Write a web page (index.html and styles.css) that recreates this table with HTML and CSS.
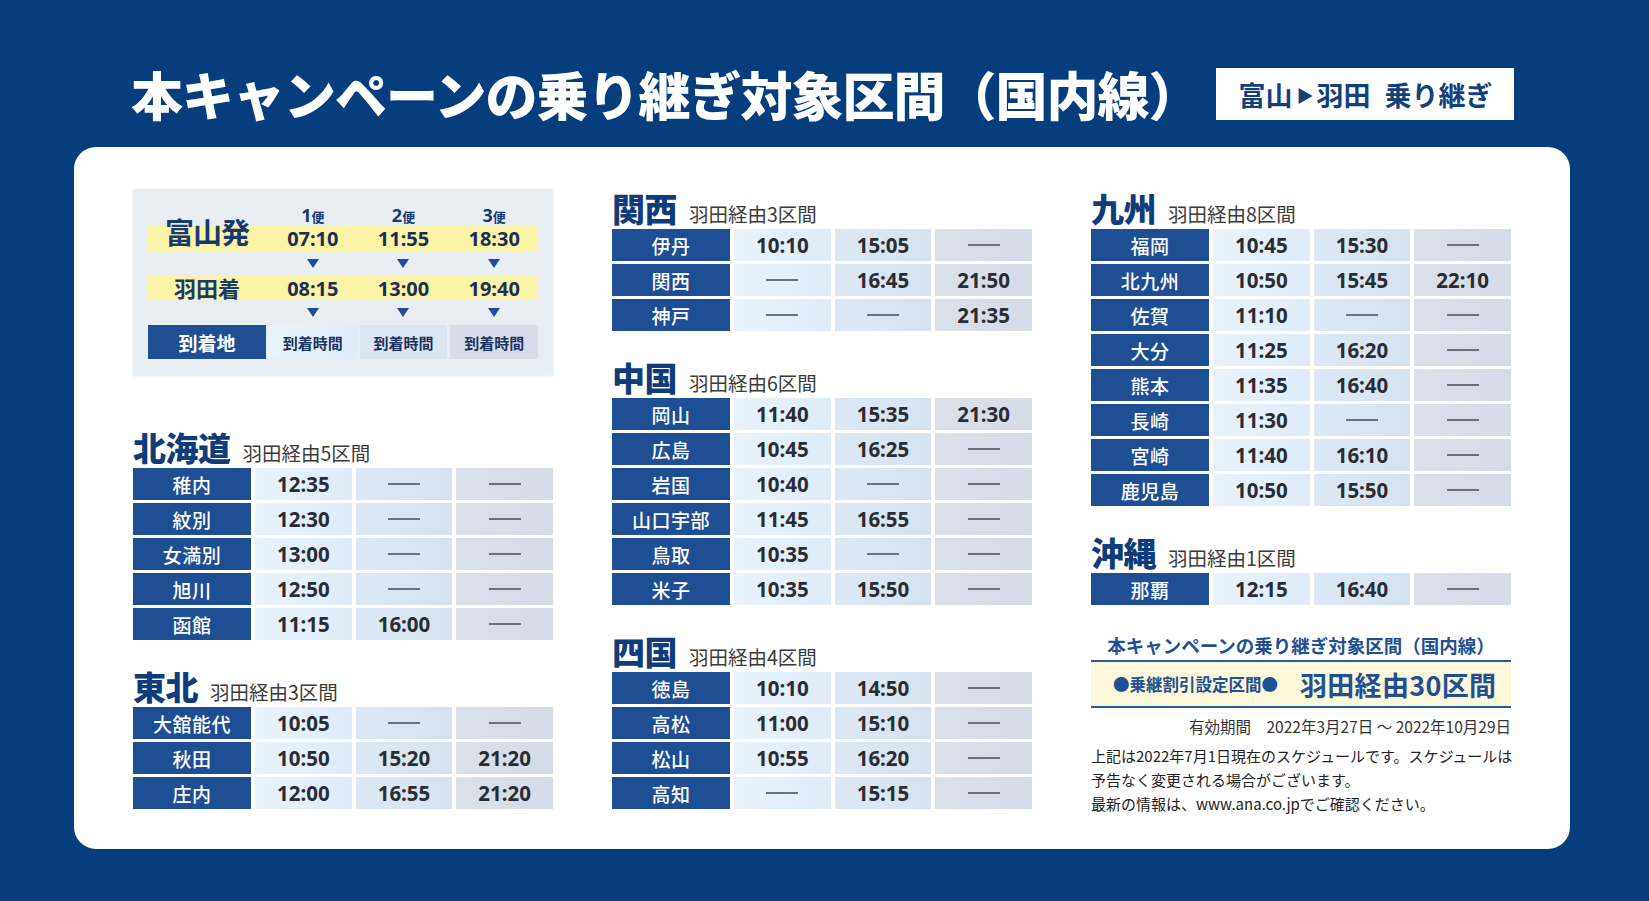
FILE: index.html
```html
<!DOCTYPE html>
<html lang="ja">
<head>
<meta charset="utf-8">
<title>本キャンペーンの乗り継ぎ対象区間（国内線）</title>
<link rel="stylesheet" href="styles.css">
</head>
<body>
<header class="page-head">
  <h1 class="title">本キャンペーンの乗り継ぎ対象区間（国内線）</h1>
  <div class="route-box">富山<span class="tri">▶</span>羽田<span class="sp"></span>乗り継ぎ</div>
</header>

<main class="card">
  <div class="col">
    <div class="flight-box">
      <div class="band band-1"></div>
      <div class="band band-2"></div>
      <div class="dep-label">富山発</div>
      <div class="bin c2 r1"><b>1</b>便</div>
      <div class="bin c3 r1"><b>2</b>便</div>
      <div class="bin c4 r1"><b>3</b>便</div>
      <div class="ft c2 r2">07:10</div>
      <div class="ft c3 r2">11:55</div>
      <div class="ft c4 r2">18:30</div>
      <div class="arr c2 r3"><i></i></div>
      <div class="arr c3 r3"><i></i></div>
      <div class="arr c4 r3"><i></i></div>
      <div class="arr-label">羽田着</div>
      <div class="ft c2 r4">08:15</div>
      <div class="ft c3 r4">13:00</div>
      <div class="ft c4 r4">19:40</div>
      <div class="arr c2 r5"><i></i></div>
      <div class="arr c3 r5"><i></i></div>
      <div class="arr c4 r5"><i></i></div>
      <div class="dest-head">到着地</div>
      <div class="dest-time t1">到着時間</div>
      <div class="dest-time t2">到着時間</div>
      <div class="dest-time t3">到着時間</div>
    </div>

    <section class="sec sec-first">
      <h2 class="sec-head"><span class="area">北海道</span><span class="sub">羽田経由5区間</span></h2>
      <div class="tbl">
        <div class="row"><span class="nm">稚内</span><span class="v v1">12:35</span><span class="v v2"><i class="dash"></i></span><span class="v v3"><i class="dash"></i></span></div>
        <div class="row"><span class="nm">紋別</span><span class="v v1">12:30</span><span class="v v2"><i class="dash"></i></span><span class="v v3"><i class="dash"></i></span></div>
        <div class="row"><span class="nm">女満別</span><span class="v v1">13:00</span><span class="v v2"><i class="dash"></i></span><span class="v v3"><i class="dash"></i></span></div>
        <div class="row"><span class="nm">旭川</span><span class="v v1">12:50</span><span class="v v2"><i class="dash"></i></span><span class="v v3"><i class="dash"></i></span></div>
        <div class="row"><span class="nm">函館</span><span class="v v1">11:15</span><span class="v v2">16:00</span><span class="v v3"><i class="dash"></i></span></div>
      </div>
    </section>

    <section class="sec">
      <h2 class="sec-head"><span class="area">東北</span><span class="sub">羽田経由3区間</span></h2>
      <div class="tbl">
        <div class="row"><span class="nm">大舘能代</span><span class="v v1">10:05</span><span class="v v2"><i class="dash"></i></span><span class="v v3"><i class="dash"></i></span></div>
        <div class="row"><span class="nm">秋田</span><span class="v v1">10:50</span><span class="v v2">15:20</span><span class="v v3">21:20</span></div>
        <div class="row"><span class="nm">庄内</span><span class="v v1">12:00</span><span class="v v2">16:55</span><span class="v v3">21:20</span></div>
      </div>
    </section>
  </div>

  <div class="col col-r">
    <section class="sec sec-top">
      <h2 class="sec-head"><span class="area">関西</span><span class="sub">羽田経由3区間</span></h2>
      <div class="tbl">
        <div class="row"><span class="nm">伊丹</span><span class="v v1">10:10</span><span class="v v2">15:05</span><span class="v v3"><i class="dash"></i></span></div>
        <div class="row"><span class="nm">関西</span><span class="v v1"><i class="dash"></i></span><span class="v v2">16:45</span><span class="v v3">21:50</span></div>
        <div class="row"><span class="nm">神戸</span><span class="v v1"><i class="dash"></i></span><span class="v v2"><i class="dash"></i></span><span class="v v3">21:35</span></div>
      </div>
    </section>

    <section class="sec">
      <h2 class="sec-head"><span class="area">中国</span><span class="sub">羽田経由6区間</span></h2>
      <div class="tbl">
        <div class="row"><span class="nm">岡山</span><span class="v v1">11:40</span><span class="v v2">15:35</span><span class="v v3">21:30</span></div>
        <div class="row"><span class="nm">広島</span><span class="v v1">10:45</span><span class="v v2">16:25</span><span class="v v3"><i class="dash"></i></span></div>
        <div class="row"><span class="nm">岩国</span><span class="v v1">10:40</span><span class="v v2"><i class="dash"></i></span><span class="v v3"><i class="dash"></i></span></div>
        <div class="row"><span class="nm">山口宇部</span><span class="v v1">11:45</span><span class="v v2">16:55</span><span class="v v3"><i class="dash"></i></span></div>
        <div class="row"><span class="nm">鳥取</span><span class="v v1">10:35</span><span class="v v2"><i class="dash"></i></span><span class="v v3"><i class="dash"></i></span></div>
        <div class="row"><span class="nm">米子</span><span class="v v1">10:35</span><span class="v v2">15:50</span><span class="v v3"><i class="dash"></i></span></div>
      </div>
    </section>

    <section class="sec">
      <h2 class="sec-head"><span class="area">四国</span><span class="sub">羽田経由4区間</span></h2>
      <div class="tbl">
        <div class="row"><span class="nm">徳島</span><span class="v v1">10:10</span><span class="v v2">14:50</span><span class="v v3"><i class="dash"></i></span></div>
        <div class="row"><span class="nm">高松</span><span class="v v1">11:00</span><span class="v v2">15:10</span><span class="v v3"><i class="dash"></i></span></div>
        <div class="row"><span class="nm">松山</span><span class="v v1">10:55</span><span class="v v2">16:20</span><span class="v v3"><i class="dash"></i></span></div>
        <div class="row"><span class="nm">高知</span><span class="v v1"><i class="dash"></i></span><span class="v v2">15:15</span><span class="v v3"><i class="dash"></i></span></div>
      </div>
    </section>
  </div>

  <div class="col col-r">
    <section class="sec sec-top">
      <h2 class="sec-head"><span class="area">九州</span><span class="sub">羽田経由8区間</span></h2>
      <div class="tbl">
        <div class="row"><span class="nm">福岡</span><span class="v v1">10:45</span><span class="v v2">15:30</span><span class="v v3"><i class="dash"></i></span></div>
        <div class="row"><span class="nm">北九州</span><span class="v v1">10:50</span><span class="v v2">15:45</span><span class="v v3">22:10</span></div>
        <div class="row"><span class="nm">佐賀</span><span class="v v1">11:10</span><span class="v v2"><i class="dash"></i></span><span class="v v3"><i class="dash"></i></span></div>
        <div class="row"><span class="nm">大分</span><span class="v v1">11:25</span><span class="v v2">16:20</span><span class="v v3"><i class="dash"></i></span></div>
        <div class="row"><span class="nm">熊本</span><span class="v v1">11:35</span><span class="v v2">16:40</span><span class="v v3"><i class="dash"></i></span></div>
        <div class="row"><span class="nm">長崎</span><span class="v v1">11:30</span><span class="v v2"><i class="dash"></i></span><span class="v v3"><i class="dash"></i></span></div>
        <div class="row"><span class="nm">宮崎</span><span class="v v1">11:40</span><span class="v v2">16:10</span><span class="v v3"><i class="dash"></i></span></div>
        <div class="row"><span class="nm">鹿児島</span><span class="v v1">10:50</span><span class="v v2">15:50</span><span class="v v3"><i class="dash"></i></span></div>
      </div>
    </section>

    <section class="sec">
      <h2 class="sec-head"><span class="area">沖縄</span><span class="sub">羽田経由1区間</span></h2>
      <div class="tbl">
        <div class="row"><span class="nm">那覇</span><span class="v v1">12:15</span><span class="v v2">16:40</span><span class="v v3"><i class="dash"></i></span></div>
      </div>
    </section>

    <div class="info">
      <p class="info-title">本キャンペーンの乗り継ぎ対象区間（国内線）</p>
      <div class="info-band">
        <span class="info-small">●乗継割引設定区間●</span>
        <span class="info-big">羽田経由30区間</span>
      </div>
      <p class="validity">有効期間　2022年3月27日 ～ 2022年10月29日</p>
      <p class="notes">上記は2022年7月1日現在のスケジュールです。スケジュールは<br>予告なく変更される場合がございます。<br>最新の情報は、www.ana.co.jpでご確認ください。</p>
    </div>
  </div>
</main>
</body>
</html>
```

FILE: styles.css
```css
* { box-sizing: border-box; }

html, body {
  margin: 0;
  padding: 0;
}

body {
  background: #063d7d;
  width: 1649px;
  height: 901px;
  overflow: hidden;
  font-family: "Noto Sans CJK JP", "Noto Sans", sans-serif;
  color: #222;
}

/* ---------- header ---------- */
.page-head {
  display: flex;
  align-items: center;
  padding: 68px 0 0 131px;
  height: 120px;
}

.title {
  margin: 0;
  font-size: 52px;
  line-height: 52px;
  font-weight: 900;
  color: #fff;
  letter-spacing: -1px;
  white-space: nowrap;
}

.route-box {
  margin-left: 17px;
  width: 298px;
  height: 52px;
  background: #fff;
  display: flex;
  align-items: center;
  justify-content: center;
  font-size: 27px;
  font-weight: 700;
  color: #143f7d;
  white-space: nowrap;
}

.route-box .tri {
  font-size: 17px;
  margin: 0 3px 0 4px;
}

.route-box .sp { display: inline-block; width: 14px; }

/* ---------- card ---------- */
.card {
  margin: 27px 0 0 74px;
  width: 1496px;
  height: 702px;
  background: #fff;
  border-radius: 22px;
  padding: 42px 59px 0 59px;
  display: grid;
  grid-template-columns: repeat(3, 420px);
  column-gap: 59px;
  align-items: start;
}

.col { display: flex; flex-direction: column; }

/* ---------- flight box ---------- */
.flight-box {
  height: 186px;
  background: #e9eef5;
  box-shadow: 0 1px 3px rgba(30, 60, 110, 0.12);
  padding: 15px 15px 0 15px;
  display: grid;
  grid-template-columns: 118px repeat(3, 1fr);
  grid-template-rows: 22px 25px 25px 24px 25px 34px;
  column-gap: 3px;
  color: #1b3360;
}

.band {
  grid-column: 1 / -1;
  background: #fbf4a6;
}
.band-1 { grid-row: 2; }
.band-2 { grid-row: 4; }

.c2 { grid-column: 2; }
.c3 { grid-column: 3; }
.c4 { grid-column: 4; }
.r1 { grid-row: 1; }
.r2 { grid-row: 2; }
.r3 { grid-row: 3; }
.r4 { grid-row: 4; }
.r5 { grid-row: 5; }

.dep-label {
  grid-column: 1;
  grid-row: 1 / 3;
  align-self: end;
  margin-bottom: 5px;
  text-align: center;
  font-size: 29px;
  line-height: 30px;
  font-weight: 700;
  color: #173a72;
  letter-spacing: -1px;
}

.arr-label {
  grid-column: 1;
  grid-row: 4;
  align-self: center;
  text-align: center;
  font-size: 22px;
  line-height: 24px;
  font-weight: 700;
  color: #173a72;
  margin-top: -2px;
}

.bin {
  text-align: center;
  font-size: 13px;
  line-height: 22px;
  font-weight: 700;
  color: #173a72;
}
.bin b {
  font-family: "Noto Sans", sans-serif;
  font-size: 18px;
  font-weight: 700;
}

.ft {
  text-align: center;
  font-family: "Noto Sans", sans-serif;
  font-size: 20px;
  line-height: 25px;
  font-weight: 700;
  color: #1b2f55;
}

.arr {
  display: flex;
  justify-content: center;
  align-items: center;
}
.arr i {
  display: block;
  width: 0;
  height: 0;
  border-left: 6px solid transparent;
  border-right: 6px solid transparent;
  border-top: 9px solid #1f4e94;
}

.dest-head {
  grid-column: 1;
  grid-row: 6;
  background: #1e4f95;
  color: #fff;
  font-size: 19px;
  font-weight: 700;
  display: flex;
  align-items: center;
  justify-content: center;
}

.dest-time {
  grid-row: 6;
  display: flex;
  align-items: center;
  justify-content: center;
  font-size: 15px;
  font-weight: 700;
  color: #1b3360;
}
.dest-time.t1 { grid-column: 2; background: linear-gradient(90deg, #e9f3fb, #e0edf8); }
.dest-time.t2 { grid-column: 3; background: #dbe6f1; }
.dest-time.t3 { grid-column: 4; background: #d6dde8; }

/* ---------- sections ---------- */
.sec { margin-top: 29px; }
.sec-first { margin-top: 55px; }
.col-r .sec-top { margin-top: 2px; }

.sec-head {
  margin: 0 0 2px 0;
  height: 36px;
  display: flex;
  align-items: baseline;
  white-space: nowrap;
}

.area {
  font-size: 33px;
  line-height: 35px;
  font-weight: 900;
  color: #0f3c7a;
  letter-spacing: -0.5px;
}

.sub {
  margin-left: 12px;
  font-size: 19.5px;
  font-weight: 400;
  color: #3b3b3b;
}

.tbl {
  display: flex;
  flex-direction: column;
  gap: 3px;
}

.row {
  display: grid;
  grid-template-columns: 118px repeat(3, 1fr);
  column-gap: 4px;
  height: 32px;
}

.row > span {
  display: flex;
  align-items: center;
  justify-content: center;
}

.nm {
  background: #1e4f95;
  color: #fff;
  font-size: 19px;
  font-weight: 500;
  letter-spacing: 0.5px;
}

.v {
  font-family: "Noto Sans", sans-serif;
  font-size: 20.5px;
  font-weight: 700;
  color: #2a2d34;
}
.v1 { background: linear-gradient(90deg, #e8f3fc, #dfecf8); }
.v2 { background: linear-gradient(90deg, #dce8f3, #d6e3ef); }
.v3 { background: linear-gradient(90deg, #d9e0ea, #d5dce7); }

.dash {
  display: block;
  width: 32px;
  height: 2px;
  background: #6b717d;
}

/* ---------- info block ---------- */
.info { margin-top: 30px; }

.info-title {
  margin: 0;
  text-align: center;
  font-size: 18.5px;
  line-height: 20px;
  font-weight: 700;
  color: #1f4f95;
  white-space: nowrap;
}

.info-band {
  margin-top: 5px;
  height: 48px;
  border-top: 2.5px solid #2a5a9f;
  border-bottom: 2.5px solid #2a5a9f;
  background: #fdf8da;
  display: flex;
  align-items: center;
  padding-left: 22px;
  gap: 22px;
  white-space: nowrap;
}

.info-small {
  font-size: 16.5px;
  font-weight: 700;
  color: #1f4f95;
}

.info-big {
  font-size: 27px;
  font-weight: 700;
  color: #1f4f95;
  letter-spacing: 0.3px;
}

.validity {
  margin: 8px 0 0 0;
  text-align: right;
  font-size: 15.5px;
  line-height: 20px;
  color: #333;
  white-space: nowrap;
}

.notes {
  margin: 8px 0 0 0;
  font-size: 15px;
  line-height: 24px;
  color: #222;
  white-space: nowrap;
}
```
